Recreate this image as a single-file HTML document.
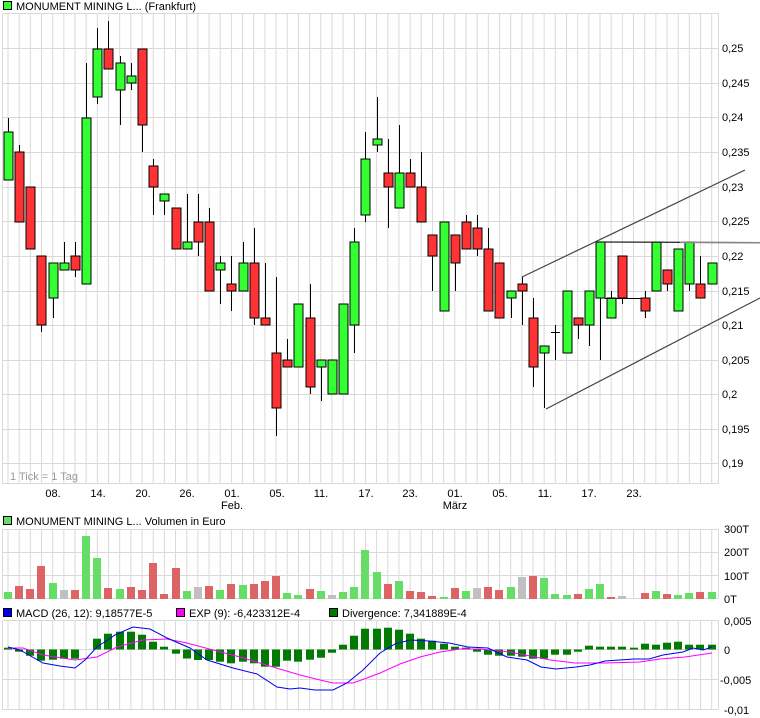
<!DOCTYPE html>
<html><head><meta charset="utf-8"><style>
html,body{margin:0;padding:0;background:#fff;}
svg{display:block;font-family:"Liberation Sans",Arial,sans-serif;font-size:11px;}
.g{fill:#33ff33;stroke:#000;stroke-width:1}
.r{fill:#ff3333;stroke:#000;stroke-width:1}
.w{stroke:#000;stroke-width:1}
.hg{stroke:#d9d9d9;stroke-width:1}
.vg{fill:#66dd66}.vr{fill:#dc6464}.vy{fill:#c0c0c0}
.vbars rect{width:8px}
.d{fill:#007a00}
</style></head><body>
<svg width="760" height="718" viewBox="0 0 760 718" xmlns="http://www.w3.org/2000/svg">
<defs>
<pattern id="vgrid" x="7.5" y="0" width="11.17" height="1000" patternUnits="userSpaceOnUse">
<rect x="0" y="0" width="1" height="1000" fill="#d9d9d9"/>
</pattern>
</defs>
<rect width="760" height="718" fill="#fff"/>

<rect x="3.5" y="1.5" width="8" height="8" fill="#33ff33" stroke="#000"/>
<text x="16" y="10" fill="#000">MONUMENT MINING L... (Frankfurt)</text>

<rect x="3" y="13.5" width="715" height="470" fill="url(#vgrid)"/>
<g class="hg">
<line x1="2.5" y1="13.5" x2="718.5" y2="13.5"/>
<line x1="2.5" y1="48.5" x2="718.5" y2="48.5"/>
<line x1="2.5" y1="83.5" x2="718.5" y2="83.5"/>
<line x1="2.5" y1="117.5" x2="718.5" y2="117.5"/>
<line x1="2.5" y1="152.5" x2="718.5" y2="152.5"/>
<line x1="2.5" y1="187.5" x2="718.5" y2="187.5"/>
<line x1="2.5" y1="221.5" x2="718.5" y2="221.5"/>
<line x1="2.5" y1="256.5" x2="718.5" y2="256.5"/>
<line x1="2.5" y1="291.5" x2="718.5" y2="291.5"/>
<line x1="2.5" y1="325.5" x2="718.5" y2="325.5"/>
<line x1="2.5" y1="360.5" x2="718.5" y2="360.5"/>
<line x1="2.5" y1="394.5" x2="718.5" y2="394.5"/>
<line x1="2.5" y1="429.5" x2="718.5" y2="429.5"/>
<line x1="2.5" y1="463.5" x2="718.5" y2="463.5"/>
<line x1="2.5" y1="483.5" x2="718.5" y2="483.5"/>
<line x1="2.5" y1="13.5" x2="2.5" y2="483.5"/>
<line x1="718.5" y1="13.5" x2="718.5" y2="483.5"/>
</g>
<text x="10" y="480" fill="#999">1 Tick = 1 Tag</text>

<g fill="#000">
<text x="722" y="52">0,25</text>
<text x="722" y="87">0,245</text>
<text x="722" y="121">0,24</text>
<text x="722" y="156">0,235</text>
<text x="722" y="191">0,23</text>
<text x="722" y="225">0,225</text>
<text x="722" y="260">0,22</text>
<text x="722" y="295">0,215</text>
<text x="722" y="329">0,21</text>
<text x="722" y="364">0,205</text>
<text x="722" y="398">0,2</text>
<text x="722" y="433">0,195</text>
<text x="722" y="467">0,19</text>
</g>

<g fill="#000" text-anchor="middle">
<text x="53" y="497">08.</text>
<text x="98" y="497">14.</text>
<text x="143" y="497">20.</text>
<text x="187" y="497">26.</text>
<text x="232" y="497">01.</text>
<text x="232" y="509">Feb.</text>
<text x="277" y="497">05.</text>
<text x="321" y="497">11.</text>
<text x="366" y="497">17.</text>
<text x="410" y="497">23.</text>
<text x="455" y="497">01.</text>
<text x="455" y="509">März</text>
<text x="500" y="497">05.</text>
<text x="545" y="497">11.</text>
<text x="589" y="497">17.</text>
<text x="634" y="497">23.</text>
</g>

<g>
<g transform="translate(8)"><line class="w" x1="0.5" y1="118" x2="0.5" y2="180"/><rect class="g" x="-4" y="132" width="9" height="48"/></g>
<g transform="translate(19)"><line class="w" x1="0.5" y1="145" x2="0.5" y2="222"/><rect class="r" x="-4" y="152" width="9" height="70"/></g>
<g transform="translate(30)"><line class="w" x1="0.5" y1="187" x2="0.5" y2="249"/><rect class="r" x="-4" y="187" width="9" height="62"/></g>
<g transform="translate(41)"><line class="w" x1="0.5" y1="256" x2="0.5" y2="332"/><rect class="r" x="-4" y="256" width="9" height="69"/></g>
<g transform="translate(53)"><line class="w" x1="0.5" y1="263" x2="0.5" y2="318"/><rect class="g" x="-4" y="263" width="9" height="35"/></g>
<g transform="translate(64)"><line class="w" x1="0.5" y1="242" x2="0.5" y2="270"/><rect class="g" x="-4" y="263" width="9" height="7"/></g>
<g transform="translate(75)"><line class="w" x1="0.5" y1="242" x2="0.5" y2="277"/><rect class="r" x="-4" y="256" width="9" height="14"/></g>
<g transform="translate(86)"><line class="w" x1="0.5" y1="63" x2="0.5" y2="284"/><rect class="g" x="-4" y="118" width="9" height="166"/></g>
<g transform="translate(97)"><line class="w" x1="0.5" y1="28" x2="0.5" y2="104"/><rect class="g" x="-4" y="49" width="9" height="48"/></g>
<g transform="translate(108)"><line class="w" x1="0.5" y1="21" x2="0.5" y2="69"/><rect class="r" x="-4" y="49" width="9" height="20"/></g>
<g transform="translate(120)"><line class="w" x1="0.5" y1="56" x2="0.5" y2="125"/><rect class="g" x="-4" y="63" width="9" height="27"/></g>
<g transform="translate(131)"><line class="w" x1="0.5" y1="63" x2="0.5" y2="90"/><rect class="g" x="-4" y="76" width="9" height="7"/></g>
<g transform="translate(142)"><line class="w" x1="0.5" y1="49" x2="0.5" y2="152"/><rect class="r" x="-4" y="49" width="9" height="76"/></g>
<g transform="translate(153)"><line class="w" x1="0.5" y1="159" x2="0.5" y2="215"/><rect class="r" x="-4" y="166" width="9" height="21"/></g>
<g transform="translate(164)"><line class="w" x1="0.5" y1="194" x2="0.5" y2="215"/><rect class="g" x="-4" y="194" width="9" height="7"/></g>
<g transform="translate(176)"><line class="w" x1="0.5" y1="208" x2="0.5" y2="249"/><rect class="r" x="-4" y="208" width="9" height="41"/></g>
<g transform="translate(187)"><line class="w" x1="0.5" y1="194" x2="0.5" y2="249"/><rect class="g" x="-4" y="242" width="9" height="7"/></g>
<g transform="translate(198)"><line class="w" x1="0.5" y1="194" x2="0.5" y2="256"/><rect class="r" x="-4" y="222" width="9" height="20"/></g>
<g transform="translate(209)"><line class="w" x1="0.5" y1="208" x2="0.5" y2="291"/><rect class="r" x="-4" y="222" width="9" height="69"/></g>
<g transform="translate(220)"><line class="w" x1="0.5" y1="256" x2="0.5" y2="304"/><rect class="g" x="-4" y="263" width="9" height="7"/></g>
<g transform="translate(231)"><line class="w" x1="0.5" y1="256" x2="0.5" y2="311"/><rect class="r" x="-4" y="284" width="9" height="7"/></g>
<g transform="translate(243)"><line class="w" x1="0.5" y1="242" x2="0.5" y2="291"/><rect class="g" x="-4" y="263" width="9" height="28"/></g>
<g transform="translate(254)"><line class="w" x1="0.5" y1="228" x2="0.5" y2="325"/><rect class="r" x="-4" y="263" width="9" height="55"/></g>
<g transform="translate(265)"><line class="w" x1="0.5" y1="263" x2="0.5" y2="325"/><rect class="r" x="-4" y="318" width="9" height="7"/></g>
<g transform="translate(276)"><line class="w" x1="0.5" y1="277" x2="0.5" y2="436"/><rect class="r" x="-4" y="353" width="9" height="55"/></g>
<g transform="translate(287)"><line class="w" x1="0.5" y1="339" x2="0.5" y2="367"/><rect class="r" x="-4" y="360" width="9" height="7"/></g>
<g transform="translate(298)"><line class="w" x1="0.5" y1="304" x2="0.5" y2="367"/><rect class="g" x="-4" y="304" width="9" height="63"/></g>
<g transform="translate(310)"><line class="w" x1="0.5" y1="284" x2="0.5" y2="394"/><rect class="r" x="-4" y="318" width="9" height="69"/></g>
<g transform="translate(321)"><line class="w" x1="0.5" y1="360" x2="0.5" y2="401"/><rect class="g" x="-4" y="360" width="9" height="7"/></g>
<g transform="translate(332)"><line class="w" x1="0.5" y1="360" x2="0.5" y2="394"/><rect class="g" x="-4" y="360" width="9" height="34"/></g>
<g transform="translate(343)"><line class="w" x1="0.5" y1="304" x2="0.5" y2="394"/><rect class="g" x="-4" y="304" width="9" height="90"/></g>
<g transform="translate(354)"><line class="w" x1="0.5" y1="228" x2="0.5" y2="353"/><rect class="g" x="-4" y="242" width="9" height="83"/></g>
<g transform="translate(365)"><line class="w" x1="0.5" y1="132" x2="0.5" y2="222"/><rect class="g" x="-4" y="159" width="9" height="56"/></g>
<g transform="translate(377)"><line class="w" x1="0.5" y1="97" x2="0.5" y2="152"/><rect class="g" x="-4" y="139" width="9" height="6"/></g>
<g transform="translate(388)"><line class="w" x1="0.5" y1="139" x2="0.5" y2="228"/><rect class="r" x="-4" y="173" width="9" height="14"/></g>
<g transform="translate(399)"><line class="w" x1="0.5" y1="125" x2="0.5" y2="208"/><rect class="g" x="-4" y="173" width="9" height="35"/></g>
<g transform="translate(410)"><line class="w" x1="0.5" y1="159" x2="0.5" y2="187"/><rect class="r" x="-4" y="173" width="9" height="14"/></g>
<g transform="translate(421)"><line class="w" x1="0.5" y1="152" x2="0.5" y2="222"/><rect class="r" x="-4" y="187" width="9" height="35"/></g>
<g transform="translate(432)"><line class="w" x1="0.5" y1="235" x2="0.5" y2="291"/><rect class="r" x="-4" y="235" width="9" height="21"/></g>
<g transform="translate(444)"><line class="w" x1="0.5" y1="222" x2="0.5" y2="311"/><rect class="g" x="-4" y="222" width="9" height="89"/></g>
<g transform="translate(455)"><line class="w" x1="0.5" y1="235" x2="0.5" y2="291"/><rect class="r" x="-4" y="235" width="9" height="28"/></g>
<g transform="translate(466)"><line class="w" x1="0.5" y1="215" x2="0.5" y2="249"/><rect class="r" x="-4" y="222" width="9" height="27"/></g>
<g transform="translate(477)"><line class="w" x1="0.5" y1="215" x2="0.5" y2="256"/><rect class="r" x="-4" y="228" width="9" height="21"/></g>
<g transform="translate(488)"><line class="w" x1="0.5" y1="228" x2="0.5" y2="311"/><rect class="r" x="-4" y="249" width="9" height="62"/></g>
<g transform="translate(499)"><line class="w" x1="0.5" y1="263" x2="0.5" y2="318"/><rect class="r" x="-4" y="263" width="9" height="55"/></g>
<g transform="translate(511)"><line class="w" x1="0.5" y1="291" x2="0.5" y2="318"/><rect class="g" x="-4" y="291" width="9" height="7"/></g>
<g transform="translate(522)"><line class="w" x1="0.5" y1="277" x2="0.5" y2="325"/><rect class="r" x="-4" y="284" width="9" height="7"/></g>
<g transform="translate(533)"><line class="w" x1="0.5" y1="298" x2="0.5" y2="387"/><rect class="r" x="-4" y="318" width="9" height="49"/></g>
<g transform="translate(544)"><line class="w" x1="0.5" y1="346" x2="0.5" y2="408"/><rect class="g" x="-4" y="346" width="9" height="7"/></g>
<g transform="translate(555)"><line class="w" x1="0.5" y1="325" x2="0.5" y2="360"/><line class="w" x1="-4" y1="332.5" x2="5" y2="332.5"/></g>
<g transform="translate(567)"><line class="w" x1="0.5" y1="291" x2="0.5" y2="353"/><rect class="g" x="-4" y="291" width="9" height="62"/></g>
<g transform="translate(578)"><line class="w" x1="0.5" y1="318" x2="0.5" y2="339"/><rect class="r" x="-4" y="318" width="9" height="7"/></g>
<g transform="translate(589)"><line class="w" x1="0.5" y1="291" x2="0.5" y2="346"/><rect class="g" x="-4" y="291" width="9" height="34"/></g>
<g transform="translate(600)"><line class="w" x1="0.5" y1="242" x2="0.5" y2="360"/><rect class="g" x="-4" y="242" width="9" height="56"/></g>
<g transform="translate(611)"><line class="w" x1="0.5" y1="291" x2="0.5" y2="318"/><rect class="g" x="-4" y="298" width="9" height="20"/></g>
<g transform="translate(622)"><line class="w" x1="0.5" y1="256" x2="0.5" y2="304"/><rect class="r" x="-4" y="256" width="9" height="42"/></g>
<line class="w" x1="605" y1="298.5" x2="645" y2="298.5"/>
<g transform="translate(645)"><line class="w" x1="0.5" y1="291" x2="0.5" y2="318"/><rect class="r" x="-4" y="298" width="9" height="13"/></g>
<g transform="translate(656)"><line class="w" x1="0.5" y1="242" x2="0.5" y2="291"/><rect class="g" x="-4" y="242" width="9" height="49"/></g>
<g transform="translate(667)"><line class="w" x1="0.5" y1="270" x2="0.5" y2="291"/><rect class="r" x="-4" y="270" width="9" height="14"/></g>
<g transform="translate(678)"><line class="w" x1="0.5" y1="249" x2="0.5" y2="311"/><rect class="g" x="-4" y="249" width="9" height="62"/></g>
<g transform="translate(689)"><line class="w" x1="0.5" y1="242" x2="0.5" y2="291"/><rect class="g" x="-4" y="242" width="9" height="42"/></g>
<g transform="translate(700)"><line class="w" x1="0.5" y1="256" x2="0.5" y2="298"/><rect class="r" x="-4" y="284" width="9" height="14"/></g>
<g transform="translate(712)"><line class="w" x1="0.5" y1="263" x2="0.5" y2="284"/><rect class="g" x="-4" y="263" width="9" height="21"/></g>
</g>

<g stroke="#444" stroke-width="1.2" fill="none">
<line x1="522" y1="277" x2="745" y2="170"/>
<line x1="546" y1="409" x2="760" y2="298"/>
</g>
<line x1="598" y1="242" x2="760" y2="242.6" stroke="#222" stroke-width="1.2"/>
<line x1="680" y1="242.4" x2="760" y2="242.8" stroke="#888" stroke-width="1.5"/>

<rect x="3.5" y="516.5" width="8" height="8" fill="#66dd66" stroke="#000"/>
<text x="16" y="525" fill="#000">MONUMENT MINING L... Volumen in Euro</text>
<rect x="3" y="529" width="715" height="70" fill="url(#vgrid)"/>
<g class="hg">
<line x1="2.5" y1="529.5" x2="718.5" y2="529.5"/>
<line x1="2.5" y1="552.5" x2="718.5" y2="552.5"/>
<line x1="2.5" y1="575.5" x2="718.5" y2="575.5"/>
<line x1="2.5" y1="598.5" x2="718.5" y2="598.5"/>
<line x1="2.5" y1="529.5" x2="2.5" y2="598.5"/>
<line x1="718.5" y1="529.5" x2="718.5" y2="598.5"/>
</g>
<g fill="#000">
<text x="724" y="533">300T</text>
<text x="724" y="556">200T</text>
<text x="724" y="580">100T</text>
<text x="724" y="603">0T</text>
</g>
<g class="vbars" transform="translate(-1,0)">
<rect class="vg" x="5" y="592" width="8" height="7"/>
<rect class="vr" x="16" y="586" width="8" height="13"/>
<rect class="vr" x="27" y="589" width="8" height="10"/>
<rect class="vr" x="38" y="566" width="8" height="33"/>
<rect class="vg" x="50" y="583" width="8" height="16"/>
<rect class="vy" x="61" y="590" width="8" height="9"/>
<rect class="vr" x="72" y="590" width="8" height="9"/>
<rect class="vg" x="83" y="536" width="8" height="63"/>
<rect class="vg" x="94" y="558" width="8" height="41"/>
<rect class="vr" x="105" y="588" width="8" height="11"/>
<rect class="vg" x="117" y="589" width="8" height="10"/>
<rect class="vr" x="128" y="587" width="8" height="12"/>
<rect class="vr" x="139" y="590" width="8" height="9"/>
<rect class="vr" x="150" y="563" width="8" height="36"/>
<rect class="vr" x="161" y="594" width="8" height="5"/>
<rect class="vr" x="173" y="568" width="8" height="31"/>
<rect class="vg" x="184" y="591" width="8" height="8"/>
<rect class="vy" x="195" y="587" width="8" height="12"/>
<rect class="vr" x="206" y="586" width="8" height="13"/>
<rect class="vg" x="217" y="590" width="8" height="9"/>
<rect class="vr" x="228" y="584" width="8" height="15"/>
<rect class="vg" x="240" y="585" width="8" height="14"/>
<rect class="vr" x="251" y="584" width="8" height="15"/>
<rect class="vr" x="262" y="581" width="8" height="18"/>
<rect class="vr" x="273" y="576" width="8" height="23"/>
<rect class="vg" x="284" y="593" width="8" height="6"/>
<rect class="vg" x="295" y="595" width="8" height="4"/>
<rect class="vr" x="307" y="589" width="8" height="10"/>
<rect class="vg" x="318" y="591" width="8" height="8"/>
<rect class="vy" x="329" y="595" width="8" height="4"/>
<rect class="vg" x="340" y="592" width="8" height="7"/>
<rect class="vg" x="351" y="587" width="8" height="12"/>
<rect class="vg" x="362" y="550" width="8" height="49"/>
<rect class="vg" x="374" y="572" width="8" height="27"/>
<rect class="vr" x="385" y="584" width="8" height="15"/>
<rect class="vg" x="396" y="581" width="8" height="18"/>
<rect class="vr" x="407" y="591" width="8" height="8"/>
<rect class="vr" x="418" y="592" width="8" height="7"/>
<rect class="vr" x="429" y="596" width="8" height="3"/>
<rect class="vg" x="441" y="597" width="8" height="2"/>
<rect class="vr" x="452" y="588" width="8" height="11"/>
<rect class="vg" x="463" y="591" width="8" height="8"/>
<rect class="vy" x="474" y="588" width="8" height="11"/>
<rect class="vr" x="485" y="587" width="8" height="12"/>
<rect class="vr" x="496" y="590" width="8" height="9"/>
<rect class="vg" x="508" y="587" width="8" height="12"/>
<rect class="vy" x="519" y="577" width="8" height="22"/>
<rect class="vr" x="530" y="576" width="8" height="23"/>
<rect class="vg" x="541" y="578" width="8" height="21"/>
<rect class="vg" x="552" y="594" width="8" height="5"/>
<rect class="vg" x="564" y="595" width="8" height="4"/>
<rect class="vr" x="575" y="594" width="8" height="5"/>
<rect class="vg" x="586" y="589" width="8" height="10"/>
<rect class="vg" x="597" y="584" width="8" height="15"/>
<rect class="vr" x="608" y="597" width="8" height="2"/>
<rect class="vy" x="619" y="596" width="8" height="3"/>
<rect class="vr" x="642" y="593" width="8" height="6"/>
<rect class="vg" x="653" y="591" width="8" height="8"/>
<rect class="vr" x="664" y="594" width="8" height="5"/>
<rect class="vg" x="675" y="595" width="8" height="4"/>
<rect class="vg" x="686" y="593" width="8" height="6"/>
<rect class="vr" x="697" y="592" width="8" height="7"/>
<rect class="vg" x="709" y="592" width="8" height="7"/>
</g>

<rect x="3.5" y="608.5" width="8" height="8" fill="#0000ee" stroke="#000"/>
<text x="16" y="617" fill="#000">MACD (26, 12): 9,18577E-5</text>
<rect x="176.5" y="608.5" width="8" height="8" fill="#ff00ff" stroke="#000"/>
<text x="189" y="617" fill="#000">EXP (9): -6,423312E-4</text>
<rect x="329.5" y="608.5" width="8" height="8" fill="#007a00" stroke="#000"/>
<text x="342" y="617" fill="#000">Divergence: 7,341889E-4</text>
<rect x="3" y="620" width="715" height="90" fill="url(#vgrid)"/>
<g class="hg">
<line x1="2.5" y1="620.5" x2="718.5" y2="620.5"/>
<line x1="2.5" y1="649.5" x2="718.5" y2="649.5"/>
<line x1="2.5" y1="679.5" x2="718.5" y2="679.5"/>
<line x1="2.5" y1="709.5" x2="718.5" y2="709.5"/>
<line x1="2.5" y1="620.5" x2="2.5" y2="709.5"/>
<line x1="718.5" y1="620.5" x2="718.5" y2="709.5"/>
</g>
<g fill="#000">
<text x="724" y="625">0,005</text>
<text x="724" y="654">0</text>
<text x="720" y="684">-0,005</text>
<text x="724" y="714">-0,01</text>
</g>
<g class="d">
<rect x="4" y="647.7" width="8" height="1.8"/>
<rect x="15" y="649.5" width="8" height="2.2"/>
<rect x="26" y="649.5" width="8" height="6.2"/>
<rect x="37" y="649.5" width="8" height="11.2"/>
<rect x="49" y="649.5" width="8" height="10.2"/>
<rect x="60" y="649.5" width="8" height="9.2"/>
<rect x="71" y="649.5" width="8" height="9.2"/>
<rect x="93" y="638.7" width="8" height="10.8"/>
<rect x="104" y="633.7" width="8" height="15.8"/>
<rect x="116" y="631.7" width="8" height="17.8"/>
<rect x="127" y="631.7" width="8" height="17.8"/>
<rect x="138" y="634.7" width="8" height="14.8"/>
<rect x="149" y="641.7" width="8" height="7.8"/>
<rect x="160" y="646.7" width="8" height="2.8"/>
<rect x="172" y="649.5" width="8" height="4.2"/>
<rect x="183" y="649.5" width="8" height="9"/>
<rect x="194" y="649.5" width="8" height="10.5"/>
<rect x="205" y="649.5" width="8" height="10.5"/>
<rect x="216" y="649.5" width="8" height="12.2"/>
<rect x="227" y="649.5" width="8" height="13.8"/>
<rect x="239" y="649.5" width="8" height="12.2"/>
<rect x="250" y="649.5" width="8" height="13.8"/>
<rect x="261" y="649.5" width="8" height="17.2"/>
<rect x="272" y="649.5" width="8" height="17.2"/>
<rect x="283" y="649.5" width="8" height="11.2"/>
<rect x="294" y="649.5" width="8" height="12.2"/>
<rect x="306" y="649.5" width="8" height="10.2"/>
<rect x="317" y="649.5" width="8" height="8.2"/>
<rect x="328" y="649.5" width="8" height="3.2"/>
<rect x="339" y="644.7" width="8" height="4.8"/>
<rect x="350" y="635.7" width="8" height="13.8"/>
<rect x="361" y="628.7" width="8" height="20.8"/>
<rect x="373" y="628.7" width="8" height="20.8"/>
<rect x="384" y="627.7" width="8" height="21.8"/>
<rect x="395" y="629.7" width="8" height="19.8"/>
<rect x="406" y="633.7" width="8" height="15.8"/>
<rect x="417" y="638.7" width="8" height="10.8"/>
<rect x="428" y="640.7" width="8" height="8.8"/>
<rect x="440" y="643.7" width="8" height="5.8"/>
<rect x="451" y="646.7" width="8" height="2.8"/>
<rect x="462" y="647.7" width="8" height="1.8"/>
<rect x="473" y="649.5" width="8" height="2.2"/>
<rect x="484" y="649.5" width="8" height="5.2"/>
<rect x="495" y="649.5" width="8" height="6.2"/>
<rect x="507" y="649.5" width="8" height="6.2"/>
<rect x="518" y="649.5" width="8" height="7.2"/>
<rect x="529" y="649.5" width="8" height="9.2"/>
<rect x="540" y="649.5" width="8" height="9.2"/>
<rect x="551" y="649.5" width="8" height="5.2"/>
<rect x="563" y="649.5" width="8" height="5.2"/>
<rect x="574" y="649.5" width="8" height="2.2"/>
<rect x="585" y="645.7" width="8" height="3.8"/>
<rect x="596" y="646.7" width="8" height="2.8"/>
<rect x="607" y="646.7" width="8" height="2.8"/>
<rect x="618" y="646.7" width="8" height="2.8"/>
<rect x="630" y="647.7" width="8" height="1.8"/>
<rect x="641" y="643.7" width="8" height="5.8"/>
<rect x="652" y="644.7" width="8" height="4.8"/>
<rect x="663" y="642.7" width="8" height="6.8"/>
<rect x="674" y="641.7" width="8" height="7.8"/>
<rect x="685" y="644.7" width="8" height="4.8"/>
<rect x="696" y="644.7" width="8" height="4.8"/>
<rect x="708" y="644.7" width="8" height="4.8"/>
</g>
<polyline fill="none" stroke="#ff00ff" stroke-width="1" points="8,648 23,648 43,655 75,660 97,657 117,647 143,640 167,639 187,643 213,650 240,657 273,667 300,675 320,680 333,683 353,683 367,678 380,673 400,664 420,657 440,652 460,649 480,649 510,652 530,656 550,660 575,663 605,663 640,662 660,659 685,657 712,653"/>
<polyline fill="none" stroke="#0000ee" stroke-width="1" points="8,647 20,650 43,663 60,666 75,668 85,660 97,647 115,635 133,627 150,629 167,638 190,648 207,660 233,668 257,674 277,687 290,689 300,688 315,690 333,690 347,683 363,670 380,653 395,644 410,640 429,641 449,643 468,647 488,648 507,657 527,660 541,667 556,669 576,667 590,665 605,661 634,659 649,659 663,655 683,652 693,648 703,650 712,647"/>
</svg>
</body></html>
